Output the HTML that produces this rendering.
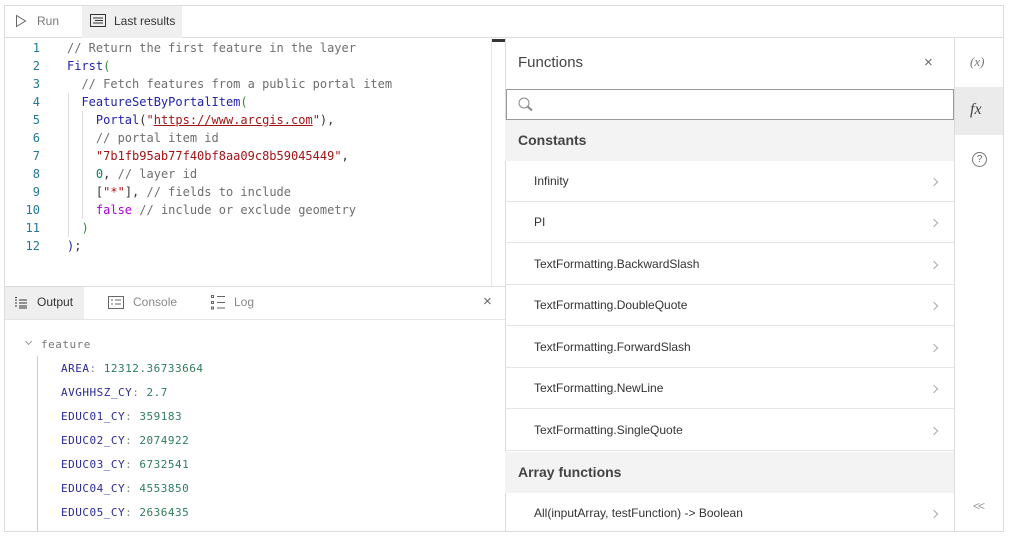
<!DOCTYPE html>
<html><head><style>
*{box-sizing:border-box;margin:0;padding:0}
body{width:1009px;height:537px;background:#fff;font-family:"Liberation Sans",sans-serif;position:relative;overflow:hidden}
.a{position:absolute}
.mono{font-family:"DejaVu Sans Mono","Liberation Mono",monospace}
.code div{position:absolute;left:0;height:18px;font-size:12px;line-height:18px;white-space:pre;color:#333}
.ln{position:absolute;width:40px;text-align:right;color:#237893;font-size:12px}
.code .cm,.cm{color:#6e6e6e}.fn{color:#2222aa}.st{color:#a31515}.nm{color:#098658}.kw{color:#af00db}.br{color:#3a8a3a}
.out div{position:absolute;font-size:11px;letter-spacing:.5px;white-space:pre}
.k{color:#2a2a9a}.v{color:#2e7d5b}
.row{position:absolute;left:505px;width:449px;height:41px;border-bottom:1px solid #e4e4e4;font-size:12px;color:#333;padding-left:29px;line-height:40px}
.row:after{content:"";position:absolute;right:17px;top:18px;width:5px;height:5px;border-right:1px solid #aaa;border-top:1px solid #aaa;transform:rotate(45deg)}
.hd{position:absolute;left:505px;width:449px;height:41px;background:#f3f3f3;font-size:14px;font-weight:bold;color:#444;padding-left:13px;line-height:40px}
</style></head><body>
<div class="a" style="left:4px;top:5px;width:1000px;height:527px;border:1px solid #dcdcdc"></div>
<div class="a" style="left:5px;top:6px;width:998px;height:32px;border-bottom:1px solid #dcdcdc"></div>
<div class="a" style="left:82px;top:6px;width:100px;height:32px;background:#efefef"></div>
<svg class="a" style="left:15px;top:14px" width="12" height="14"><path d="M1.5 1.5 L10.5 7 L1.5 12.5 Z" fill="none" stroke="#666" stroke-width="1"/></svg>
<div class="a" style="left:37px;top:14px;font-size:12px;color:#777">Run</div>
<svg class="a" style="left:90px;top:14px" width="16" height="13"><rect x="0.5" y="0.5" width="15" height="12" fill="none" stroke="#333"/><path d="M3 4h10M5 6.5h8M3 9h10" stroke="#333"/></svg>
<div class="a" style="left:114px;top:14px;font-size:12px;color:#333">Last results</div>
<div class="a" style="left:491px;top:38px;width:1px;height:248px;background:#e4e4e4"></div>
<div class="a" style="left:492px;top:39px;width:13px;height:3px;background:#333"></div>
<div class="a mono code" style="left:0;top:38px">
<div style="top:1px"><span class="ln" style="left:0">1</span></div>
<div style="top:19px"><span class="ln" style="left:0">2</span></div>
<div style="top:37px"><span class="ln" style="left:0">3</span></div>
<div style="top:55px"><span class="ln" style="left:0">4</span></div>
<div style="top:73px"><span class="ln" style="left:0">5</span></div>
<div style="top:91px"><span class="ln" style="left:0">6</span></div>
<div style="top:109px"><span class="ln" style="left:0">7</span></div>
<div style="top:127px"><span class="ln" style="left:0">8</span></div>
<div style="top:145px"><span class="ln" style="left:0">9</span></div>
<div style="top:163px"><span class="ln" style="left:0">10</span></div>
<div style="top:181px"><span class="ln" style="left:0">11</span></div>
<div style="top:199px"><span class="ln" style="left:0">12</span></div>
</div>
<div class="a" style="left:68px;top:93px;width:1px;height:144px;background:#ddd"></div>
<div class="a" style="left:82px;top:111px;width:1px;height:108px;background:#ddd"></div>
<div class="a mono code" style="left:67px;top:38px;font-size:12px">
<div style="top:1px" class="cm">// Return the first feature in the layer</div>
<div style="top:19px"><span class="fn">First</span><span class="br">(</span></div>
<div style="top:37px" class="cm">  // Fetch features from a public portal item</div>
<div style="top:55px">  <span class="fn">FeatureSetByPortalItem</span><span class="br">(</span></div>
<div style="top:73px">    <span class="fn">Portal</span>(<span class="st">"<u>https://www.arcgis.com</u>"</span>),</div>
<div style="top:91px" class="cm">    // portal item id</div>
<div style="top:109px">    <span class="st">"7b1fb95ab77f40bf8aa09c8b59045449"</span>,</div>
<div style="top:127px">    <span class="nm">0</span>, <span class="cm">// layer id</span></div>
<div style="top:145px">    [<span class="st">"*"</span>], <span class="cm">// fields to include</span></div>
<div style="top:163px">    <span class="kw">false</span> <span class="cm">// include or exclude geometry</span></div>
<div style="top:181px">  <span class="br">)</span></div>
<div style="top:199px"><span class="fn">)</span>;</div>
</div>
<div class="a" style="left:5px;top:286px;width:500px;height:1px;background:#dcdcdc"></div>
<div class="a" style="left:5px;top:319px;width:500px;height:1px;background:#e4e4e4"></div>
<div class="a" style="left:5px;top:287px;width:79px;height:32px;background:#efefef"></div>
<svg class="a" style="left:14px;top:296px" width="14" height="13" stroke="#333"><path d="M1 1.5h2M1 4h2M5 4h8M1 7h2M5 7h8M1 10h2M5 10h8M5 12h8"/></svg>
<div class="a" style="left:37px;top:295px;font-size:12px;color:#333">Output</div>
<svg class="a" style="left:108px;top:296px" width="16" height="13"><rect x="0.5" y="0.5" width="15" height="12" fill="none" stroke="#666"/><path d="M3 4h2M7 4h6M3 8h2M7 8h6" stroke="#666"/></svg>
<div class="a" style="left:133px;top:295px;font-size:12px;color:#888">Console</div>
<svg class="a" style="left:211px;top:295px" width="15" height="15" stroke="#666" fill="none"><rect x="0.5" y="0.5" width="2" height="2"/><rect x="0.5" y="6.5" width="2" height="2"/><rect x="0.5" y="12" width="2" height="2"/><path d="M6 1.5h8M6 7.5h8M6 13h8"/></svg>
<div class="a" style="left:234px;top:295px;font-size:12px;color:#888">Log</div>
<div class="a" style="left:483px;top:293px;font-size:15px;color:#666">×</div>
<div class="a" style="left:37px;top:356px;width:1px;height:175px;background:#ccc"></div>
<div class="a" style="left:26px;top:339px;width:5px;height:5px;border-right:1px solid #999;border-bottom:1px solid #999;transform:rotate(45deg)"></div>
<div class="a mono out" style="left:0;top:0">
<div style="left:41px;top:338px;color:#777">feature</div>
<div style="left:61px;top:362px"><span class="k">AREA</span><span style="color:#888">:</span> <span class="v">12312.36733664</span></div>
<div style="left:61px;top:386px"><span class="k">AVGHHSZ_CY</span><span style="color:#888">:</span> <span class="v">2.7</span></div>
<div style="left:61px;top:410px"><span class="k">EDUC01_CY</span><span style="color:#888">:</span> <span class="v">359183</span></div>
<div style="left:61px;top:434px"><span class="k">EDUC02_CY</span><span style="color:#888">:</span> <span class="v">2074922</span></div>
<div style="left:61px;top:458px"><span class="k">EDUC03_CY</span><span style="color:#888">:</span> <span class="v">6732541</span></div>
<div style="left:61px;top:482px"><span class="k">EDUC04_CY</span><span style="color:#888">:</span> <span class="v">4553850</span></div>
<div style="left:61px;top:506px"><span class="k">EDUC05_CY</span><span style="color:#888">:</span> <span class="v">2636435</span></div>
</div>
<div class="a" style="left:505px;top:38px;width:1px;height:493px;background:#dcdcdc"></div>
<div class="a" style="left:954px;top:38px;width:1px;height:493px;background:#dcdcdc"></div>
<div class="a" style="left:518px;top:54px;font-size:15px;color:#444">Functions</div>
<div class="a" style="left:924px;top:54px;font-size:15px;color:#666">×</div>
<div class="a" style="left:506px;top:89px;width:448px;height:31px;border:1px solid #999"></div>
<svg class="a" style="left:517px;top:96px" width="18" height="17" fill="none" stroke="#888"><circle cx="7" cy="7" r="5"/><path d="M10.5 10.5 L15 14.5" stroke-width="2"/></svg>
<div class="hd" style="top:120px">Constants</div>
<div class="row" style="top:161px">Infinity</div>
<div class="row" style="top:202px">PI</div>
<div class="row" style="top:244px">TextFormatting.BackwardSlash</div>
<div class="row" style="top:285px">TextFormatting.DoubleQuote</div>
<div class="row" style="top:327px">TextFormatting.ForwardSlash</div>
<div class="row" style="top:368px">TextFormatting.NewLine</div>
<div class="row" style="top:410px">TextFormatting.SingleQuote</div>
<div class="hd" style="top:452px">Array functions</div>
<div class="row" style="top:493px;border-bottom:none">All(inputArray, testFunction) -&gt; Boolean</div>
<div class="a" style="left:955px;top:87px;width:48px;height:48px;background:#ebebeb"></div>
<div class="a" style="left:970px;top:54px;font-size:13px;color:#777;font-family:'Liberation Serif',serif;font-style:italic">(x)</div>
<div class="a" style="left:970px;top:101px;font-size:16px;color:#444;font-family:'Liberation Serif',serif;font-style:italic">fx</div>
<div class="a" style="left:972px;top:152px;width:15px;height:15px;border:1px solid #777;border-radius:50%;font-size:10px;color:#666;text-align:center;line-height:13px">?</div>
<div class="a" style="left:973px;top:499px;font-size:12px;color:#999;letter-spacing:-2px">&lt;&lt;</div>
</body></html>
